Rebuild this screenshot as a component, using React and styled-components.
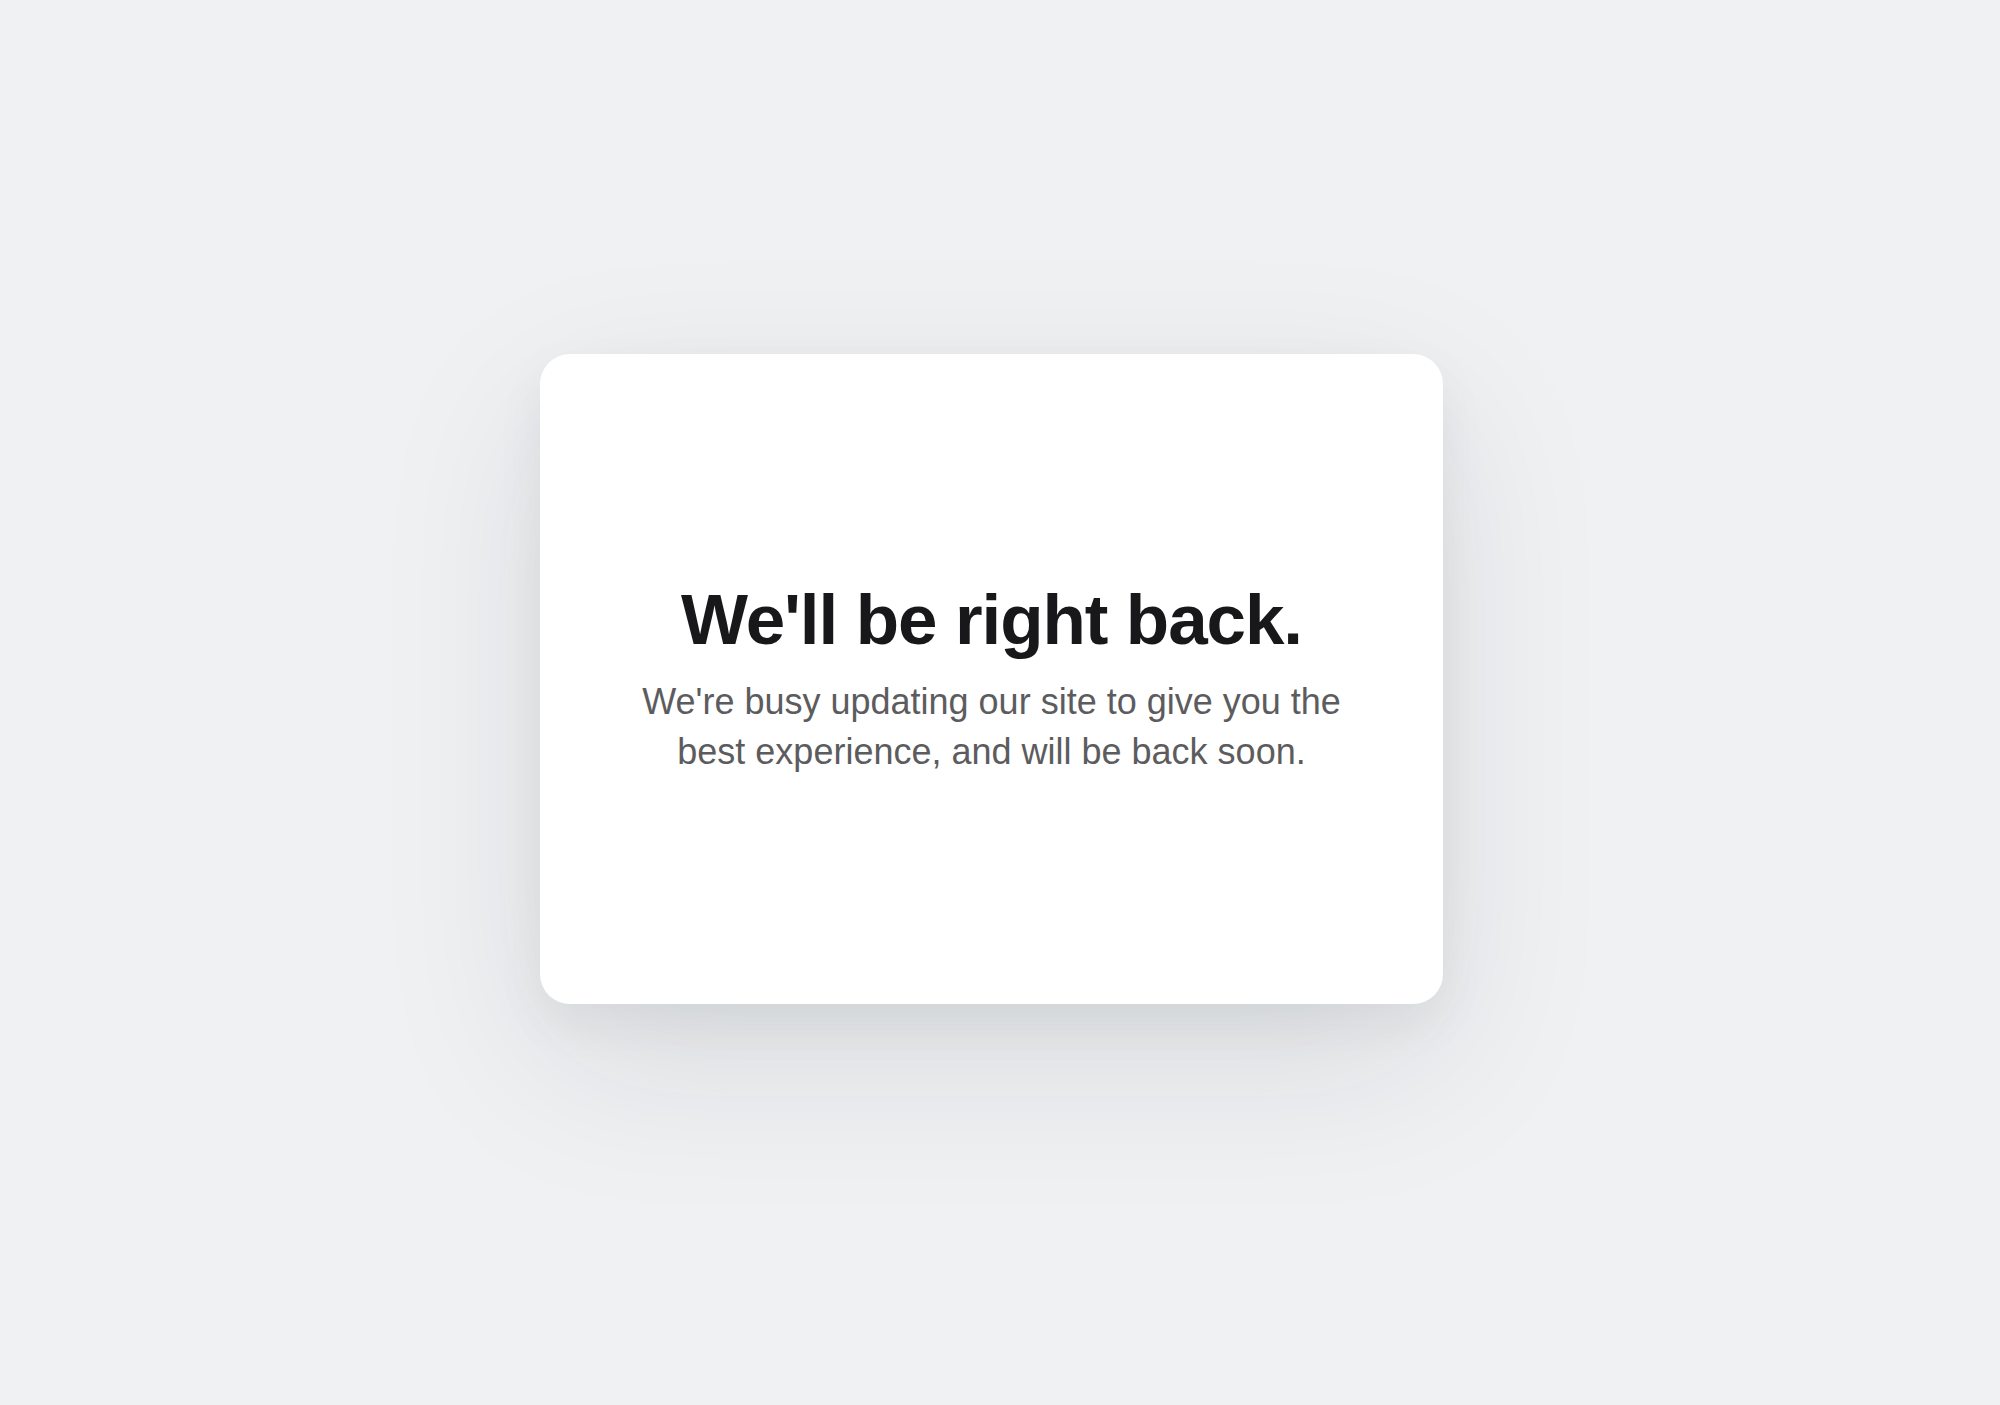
import React from 'react'
import styled, { createGlobalStyle } from 'styled-components'

const GlobalStyle = createGlobalStyle`
  html, body {
    margin: 0;
    padding: 0;
    background: #f0f1f3;
  }

  body {
    font-family: 'Liberation Sans', Arial, Helvetica, sans-serif;
    -webkit-font-smoothing: antialiased;
  }
`

const Page = styled.main`
  box-sizing: border-box;
  min-height: 100vh;
  display: flex;
  align-items: center;
  justify-content: center;
  padding: 0 17px 48px 0;
`

const Card = styled.section`
  box-sizing: border-box;
  width: 903px;
  height: 650px;
  border-radius: 30px;
  background: #ffffff;
  display: flex;
  flex-direction: column;
  align-items: center;
  justify-content: center;
  text-align: center;
  box-shadow:
    0 55px 170px rgba(24, 26, 40, 0.1),
    0 20px 50px rgba(24, 26, 40, 0.06);
`

const Heading = styled.h1`
  margin: 0;
  font-size: 71px;
  line-height: 78px;
  font-weight: 700;
  letter-spacing: -1.1px;
  color: #18181b;
`

const Message = styled.p`
  margin: 18px 0 0;
  max-width: 740px;
  font-size: 36px;
  line-height: 50px;
  font-weight: 400;
  color: #5c5c5e;
`

const App = () => (
  <>
    <GlobalStyle />
    <Page>
      <Card>
        <Heading>We'll be right back.</Heading>
        <Message>
          We're busy updating our site to give you the best experience, and
          will be back soon.
        </Message>
      </Card>
    </Page>
  </>
)

export default App
